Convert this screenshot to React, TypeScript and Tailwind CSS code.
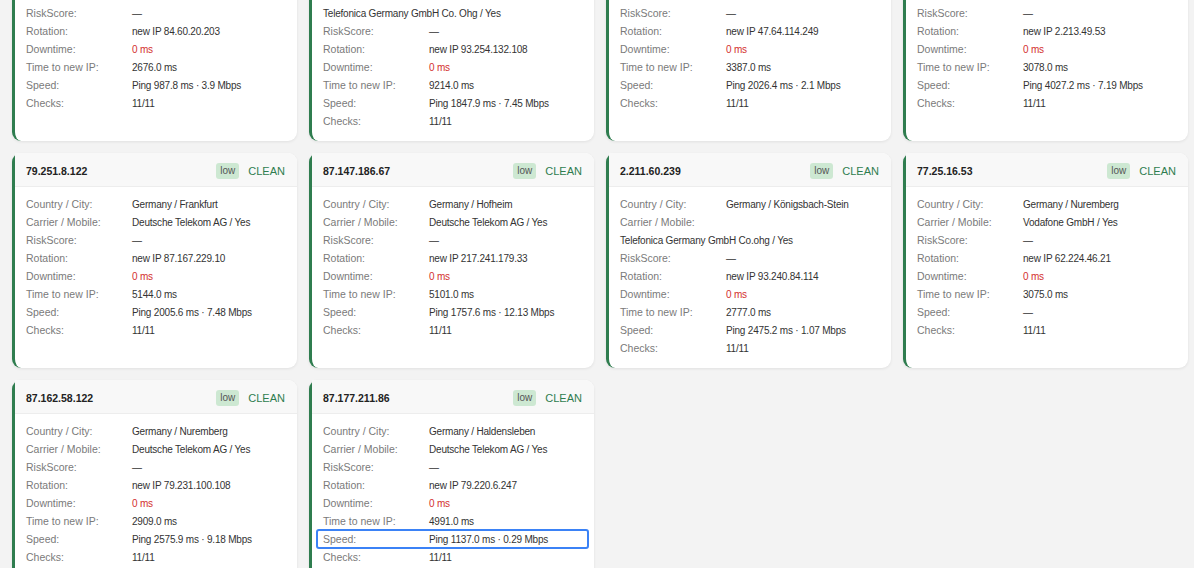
import React from "react";

type Row = { label: string; value: string; red?: boolean; wrap?: boolean; focus?: boolean };
type Card = { ip: string; rows: Row[] };

const mk = (
  country: string,
  carrier: string,
  rot: string,
  time: string,
  speed: string,
  opts: { wrap?: boolean; focusSpeed?: boolean } = {}
): Row[] => [
  { label: "Country / City:", value: country },
  { label: "Carrier / Mobile:", value: carrier, wrap: opts.wrap },
  { label: "RiskScore:", value: "—" },
  { label: "Rotation:", value: rot },
  { label: "Downtime:", value: "0 ms", red: true },
  { label: "Time to new IP:", value: time },
  { label: "Speed:", value: speed, focus: opts.focusSpeed },
  { label: "Checks:", value: "11/11" },
];

const cards: Card[] = [
  { ip: "84.60.19.77", rows: mk("Germany / Berlin", "Deutsche Telekom AG / Yes", "new IP 84.60.20.203", "2676.0 ms", "Ping 987.8 ms · 3.9 Mbps") },
  { ip: "93.254.130.12", rows: mk("Germany / Munich", "Telefonica Germany GmbH Co. Ohg / Yes", "new IP 93.254.132.108", "9214.0 ms", "Ping 1847.9 ms · 7.45 Mbps", { wrap: true }) },
  { ip: "47.64.110.5", rows: mk("Germany / Hamburg", "Vodafone GmbH / Yes", "new IP 47.64.114.249", "3387.0 ms", "Ping 2026.4 ms · 2.1 Mbps") },
  { ip: "2.213.40.18", rows: mk("Germany / Cologne", "Vodafone GmbH / Yes", "new IP 2.213.49.53", "3078.0 ms", "Ping 4027.2 ms · 7.19 Mbps") },
  { ip: "79.251.8.122", rows: mk("Germany / Frankfurt", "Deutsche Telekom AG / Yes", "new IP 87.167.229.10", "5144.0 ms", "Ping 2005.6 ms · 7.48 Mbps") },
  { ip: "87.147.186.67", rows: mk("Germany / Hofheim", "Deutsche Telekom AG / Yes", "new IP 217.241.179.33", "5101.0 ms", "Ping 1757.6 ms · 12.13 Mbps") },
  { ip: "2.211.60.239", rows: mk("Germany / Königsbach-Stein", "Telefonica Germany GmbH Co.ohg / Yes", "new IP 93.240.84.114", "2777.0 ms", "Ping 2475.2 ms · 1.07 Mbps", { wrap: true }) },
  { ip: "77.25.16.53", rows: mk("Germany / Nuremberg", "Vodafone GmbH / Yes", "new IP 62.224.46.21", "3075.0 ms", "—") },
  { ip: "87.162.58.122", rows: mk("Germany / Nuremberg", "Deutsche Telekom AG / Yes", "new IP 79.231.100.108", "2909.0 ms", "Ping 2575.9 ms · 9.18 Mbps") },
  { ip: "87.177.211.86", rows: mk("Germany / Haldensleben", "Deutsche Telekom AG / Yes", "new IP 79.220.6.247", "4991.0 ms", "Ping 1137.0 ms · 0.29 Mbps", { focusSpeed: true }) },
];

function ProxyCard({ card }: { card: Card }) {
  return (
    <div className="flex flex-col rounded-[9px] border-l-[3px] border-[#2f7d4f] bg-white shadow-[0_1px_3px_rgba(0,0,0,0.08)]">
      <div className="flex h-[34px] items-center justify-between rounded-tr-[9px] border-b border-[#ededed] bg-[#f8f8f8] pl-[11px] pr-[12px] pt-[3px]">
        <span className="text-[10.5px] font-bold leading-[16px] text-[#222]">{card.ip}</span>
        <div className="flex items-center gap-[9px]">
          <span className="rounded-[3px] bg-[#cde8d2] px-[4px] text-[10px] leading-[16px] text-[#555]">low</span>
          <span className="text-[11px] font-medium leading-[16px] text-[#2f7d4f]">CLEAN</span>
        </div>
      </div>
      <div className="flex flex-col pl-[11px] pr-[12px] pt-[8px] pb-[11px]">
        {card.rows.map((r, i) => (
          <div key={i} className="relative flex flex-wrap items-start">
            {r.focus && (
              <span className="pointer-events-none absolute -left-[7px] -right-[7px] -top-[1px] -bottom-[1px] rounded-[3px] border-2 border-[#3b82f6]" />
            )}
            <span className="block h-[18px] w-[106px] shrink-0 text-[10.5px] leading-[18px] text-[#7a7a7a]">{r.label}</span>
            <span className={`block h-[18px] ${r.wrap ? "basis-full" : ""} pt-[1px] text-[10px] leading-[18px] tracking-[-0.2px] ${r.red ? "text-[#d32f2f]" : "text-[#333]"}`}>{r.value}</span>
          </div>
        ))}
      </div>
    </div>
  );
}

export default function App() {
  return (
    <div className="h-[568px] w-[1194px] overflow-hidden bg-[#f3f3f3]" style={{ fontFamily: '"Liberation Sans", Arial, sans-serif' }}>
      <div className="-mt-[74px] grid grid-cols-4 gap-[12px] pl-[12px] pr-[6px]">
        {cards.map((c, i) => (
          <ProxyCard key={i} card={c} />
        ))}
      </div>
    </div>
  );
}
